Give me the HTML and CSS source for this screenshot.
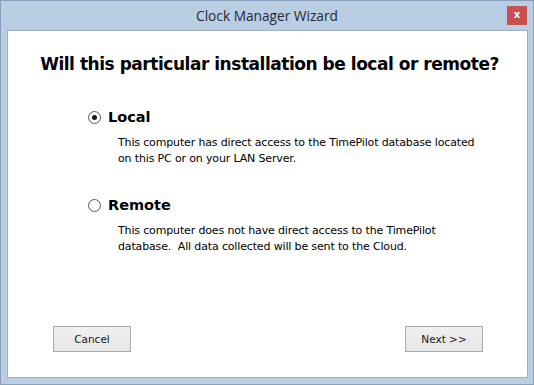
FILE: index.html
```html
<!DOCTYPE html>
<html>
<head>
<meta charset="utf-8">
<link rel="stylesheet" href="styles.css">
</head>
<body>
<div class="window">
  <div class="titlebar">
    <span class="title">Clock Manager Wizard</span>
    <span class="close">x</span>
  </div>
  <div class="content">
    <h1 class="question">Will this particular installation be local or remote?</h1>
    <div class="options">
      <div class="option">
        <div class="option-head">
          <span class="radio checked"></span>
          <span class="label">Local</span>
        </div>
        <p class="desc">This computer has direct access to the TimePilot database located<br>on this PC or on your LAN Server.</p>
      </div>
      <div class="option">
        <div class="option-head">
          <span class="radio"></span>
          <span class="label">Remote</span>
        </div>
        <p class="desc">This computer does not have direct access to the TimePilot<br>database.&nbsp; All data collected will be sent to the Cloud.</p>
      </div>
    </div>
    <div class="buttons">
      <button class="btn">Cancel</button>
      <button class="btn">Next &gt;&gt;</button>
    </div>
  </div>
</div>
</body>
</html>
```
FILE: styles.css
```css
html, body {
  margin: 0;
  padding: 0;
  background: #ffffff;
}
.window {
  width: 534px;
  height: 385px;
  box-sizing: border-box;
  border: 1px solid #8aa0ba;
  background: #b9cde3;
  display: flex;
  flex-direction: column;
}
.titlebar {
  height: 29px;
  position: relative;
  display: flex;
  align-items: center;
  justify-content: center;
}
.title {
  font-family: "Open Sans", "Noto Sans", sans-serif;
  font-size: 13.7px;
  color: #1f2a36;
  margin-top: 0;
}
.close {
  position: absolute;
  right: 6px;
  top: 5px;
  width: 20px;
  height: 19px;
  background: #c75050;
  color: #ffffff;
  font-family: "DejaVu Sans", sans-serif;
  font-weight: bold;
  font-size: 10px;
  line-height: 18px;
  text-align: center;
}
.content {
  flex: 1;
  margin: 0 5px 6px 6px;
  background: #ffffff;
  border: 1px solid #9eaebf;
  display: flex;
  flex-direction: column;
}
.question {
  margin: 21px 0 0 0;
  padding-left: 4px;
  text-align: center;
  font-family: "DejaVu Sans", sans-serif;
  font-weight: bold;
  font-size: 17px;
  line-height: 24px;
  color: #000000;
  letter-spacing: -0.47px;
}
.options {
  padding-left: 80px;
  margin-top: 29px;
  display: flex;
  flex-direction: column;
  gap: 26px;
}
.option-head {
  display: flex;
  align-items: center;
  height: 24px;
}
.radio {
  width: 13px;
  height: 13px;
  border: 1px solid #5a5a5a;
  border-radius: 50%;
  box-sizing: border-box;
  background: #ffffff;
  position: relative;
  margin-right: 7px;
  margin-left: 0;
}
.radio.checked::after {
  content: "";
  position: absolute;
  left: 3px;
  top: 3px;
  width: 5px;
  height: 5px;
  border-radius: 50%;
  background: #1a1a1a;
}
.label {
  font-family: "DejaVu Sans", sans-serif;
  font-weight: bold;
  font-size: 14.5px;
  color: #000000;
}
.desc {
  margin: 6px 0 0 30px;
  font-family: "DejaVu Sans", sans-serif;
  font-size: 11px;
  line-height: 16px;
  color: #000000;
  letter-spacing: -0.15px;
}
.buttons {
  margin-top: auto;
  margin-bottom: 25px;
  display: flex;
  justify-content: space-between;
  padding: 0 44px 0 45px;
}
.btn {
  width: 78px;
  height: 26px;
  border: 1px solid #acacac;
  background: linear-gradient(#f0f0f0, #e5e5e5);
  font-family: "DejaVu Sans", sans-serif;
  font-size: 10.5px;
  color: #1a1a1a;
  padding: 0;
}
```
